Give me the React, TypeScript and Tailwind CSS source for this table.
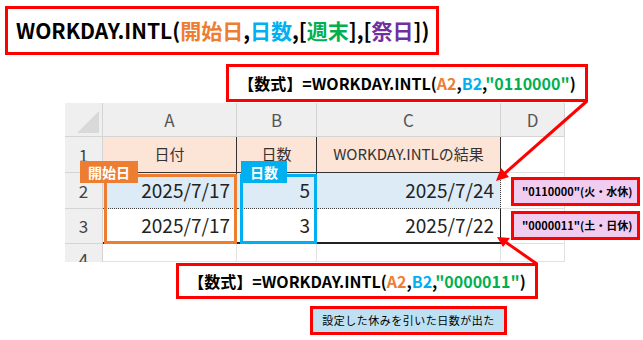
import React from "react"

const RED = "border-[#ff0000]"

function Formula({ arg }: { arg: string }) {
  return (
    <span className="whitespace-nowrap">
      【数式】=WORKDAY.INTL(<span className="text-[#ed7d31]">A2</span>,<span className="text-[#00b0f0]">B2</span>,<span className="text-[#00b050]">"{arg}"</span>)
    </span>
  )
}

export default function App() {
  const head = "bg-[#efefef] border-r border-b border-[#d4d4d4] flex items-center justify-center text-[17px] text-[#555]"
  const rowHead = "bg-[#efefef] border-r border-b border-[#d4d4d4] flex items-center justify-center text-[17px] text-[#444]"
  const grid = "border-r border-b border-[#e1e1e1]"

  return (
    <div
      className="relative w-[643px] h-[340px] bg-white overflow-hidden text-black"
      style={{ fontFamily: '"Noto Sans CJK JP", sans-serif' }}
    >
      <div className="flex flex-col">
        {/* title */}
        <div className={`ml-[5px] mt-[6px] w-[434px] h-[49px] border-[3px] ${RED} flex items-center pl-[8px] text-[21px] font-bold`}>
          <span className="whitespace-nowrap">
            WORKDAY.INTL(<span className="text-[#ed7d31]">開始日</span>,<span className="text-[#00b0f0]">日数</span>,[<span className="text-[#00b050]">週末</span>],[<span className="text-[#7030a0]">祭日</span>])
          </span>
        </div>

        <div className={`ml-[226px] mt-[9px] w-[362px] h-[38px] border-[3px] ${RED} flex items-center justify-center text-[16px] font-bold`}>
          <Formula arg="0110000" />
        </div>

        {/* sheet */}
        <div className="ml-[65px] mt-px w-[500px] h-[159px] grid grid-cols-[38px_134px_80px_184px_64px] grid-rows-[34px_36px_36px_35px_18px] text-[#222]">
          <div className="bg-[#efefef] border-r border-b border-[#d4d4d4] relative">
            <svg className="absolute right-[3px] bottom-[3px]" width="22" height="22" viewBox="0 0 22 22">
              <polygon points="22,0 22,22 0,22" fill="#d9d9d9" />
            </svg>
          </div>
          <div className={head}>A</div>
          <div className={head}>B</div>
          <div className={head}>C</div>
          <div className={head}>D</div>

          <div className={rowHead}>1</div>
          <div className="bg-[#fce4d6] border-r border-b border-[#333] flex items-center justify-center text-[15px] text-[#333]">日付</div>
          <div className="bg-[#fce4d6] border-r border-b border-[#333] flex items-center justify-center text-[15px] text-[#333]">日数</div>
          <div className="bg-[#fce4d6] border-r border-b border-[#333] flex items-center justify-center text-[15px] text-[#333] whitespace-nowrap">WORKDAY.INTLの結果</div>
          <div className={grid}></div>

          <div className={rowHead}>2</div>
          <div className="bg-[#ddebf7] border-r border-b border-dotted border-[#444] flex items-center justify-end pr-[6px] text-[19px]">2025/7/17</div>
          <div className="bg-[#ddebf7] border-r border-b border-dotted border-[#444] flex items-center justify-end pr-[6px] text-[19px]">5</div>
          <div className="bg-[#ddebf7] border-r border-b border-dotted border-[#444] flex items-center justify-end pr-[6px] text-[19px]">2025/7/24</div>
          <div className={grid}></div>

          <div className={rowHead}>3</div>
          <div className="border-r border-b-2 border-[#222] flex items-center justify-end pr-[6px] text-[19px]">2025/7/17</div>
          <div className="border-r border-b-2 border-[#222] flex items-center justify-end pr-[6px] text-[19px]">3</div>
          <div className="border-r border-b-2 border-[#222] flex items-center justify-end pr-[6px] text-[19px]">2025/7/22</div>
          <div className={grid}></div>

          <div className="bg-[#efefef] border-r border-[#d4d4d4] flex justify-center pt-[2px] text-[17px] text-[#444] overflow-hidden">4</div>
          <div className={grid}></div>
          <div className={grid}></div>
          <div className={grid}></div>
          <div className={grid}></div>
        </div>

        <div className={`ml-[176px] mt-px w-[362px] h-[36px] border-[3px] ${RED} flex items-center justify-center text-[16px] font-bold`}>
          <Formula arg="0000011" />
        </div>

        <div className={`ml-[310px] mt-[7px] w-[197px] h-[29px] border-[3px] ${RED} bg-[#bde0f2] flex items-center justify-center text-[11px] tracking-[0.5px]`}>
          設定した休みを引いた日数が出た
        </div>
      </div>

      {/* range outlines and badges */}
      <div className="absolute left-[104px] top-[174px] w-[133px] h-[70px] border-[3px] border-[#ed7d31]" />
      <div className="absolute left-[240px] top-[174px] w-[77px] h-[70px] border-[3px] border-[#00b0f0]" />
      <div className="absolute left-[80px] top-[161px] w-[58px] h-[22px] bg-[#ed7d31] text-white text-[14px] font-bold flex items-center justify-center">
        開始日
      </div>
      <div className="absolute left-[241px] top-[161px] w-[46px] h-[22px] bg-[#00b0f0] text-white text-[14px] font-bold flex items-center justify-center">
        日数
      </div>

      {/* weekend notes */}
      <div className={`absolute left-[511px] top-[177px] w-[129px] h-[29px] border-[3px] ${RED} bg-[#f0cdf0] flex items-center pl-[8px] text-[11px] font-bold whitespace-nowrap`}>
        "0110000"(火・水休)
      </div>
      <div className={`absolute left-[511px] top-[211px] w-[129px] h-[29px] border-[3px] ${RED} bg-[#f0cdf0] flex items-center pl-[8px] text-[11px] font-bold whitespace-nowrap`}>
        "0000011"(土・日休)
      </div>

      {/* arrows */}
      <svg className="absolute left-0 top-0" width="643" height="340" viewBox="0 0 643 340">
        <line x1="587" y1="101" x2="503" y2="175" stroke="#ff0000" strokeWidth="3" />
        <polygon points="496,181 501,168 509,177" fill="#ff0000" />
        <line x1="537" y1="264" x2="504" y2="241" stroke="#ff0000" strokeWidth="3" />
        <polygon points="497,237 510,238 503,247" fill="#ff0000" />
      </svg>
    </div>
  )
}
